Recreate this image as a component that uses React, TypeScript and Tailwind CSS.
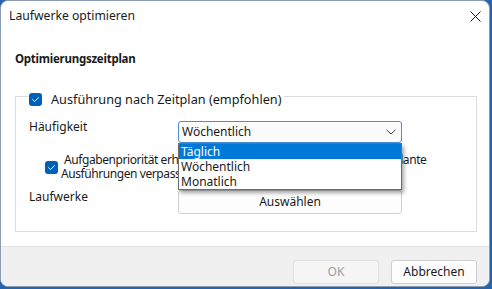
import React from "react";

function Check({ size = 13 }: { size?: number }) {
  return (
    <span
      className="flex shrink-0 items-center justify-center rounded-[3px] bg-[#005fb8]"
      style={{ width: size, height: size }}
    >
      <svg width="9" height="9" viewBox="0 0 9 9" fill="none">
        <path d="M1.6 4.7 L3.6 6.6 L7.4 2.6" stroke="white" strokeWidth="1" strokeLinecap="round" strokeLinejoin="round" />
      </svg>
    </span>
  );
}

const options = ["Täglich", "Wöchentlich", "Monatlich"];

export default function App() {
  return (
    <div className="h-[289px] w-[492px] bg-[#2563ad] font-['Noto_Sans',sans-serif] text-[12px] text-[#1a1a1a]">
      <div className="flex h-[287px] w-[490px] flex-col overflow-hidden rounded-[8px] border border-[#8c9db3] bg-white">
        {/* title bar */}
        <div className="flex h-[30px] items-center justify-between pl-[8px] pr-[8px]">
          <span className="text-[12.2px] leading-[16px]">Laufwerke optimieren</span>
          <svg width="11" height="11" viewBox="0 0 11 11">
            <path d="M0.5 0.5 L10.5 10.5 M10.5 0.5 L0.5 10.5" stroke="#1a1a1a" strokeWidth="1" />
          </svg>
        </div>

        <h1 className="ml-[14px] mt-[20px] text-[11.5px] font-bold leading-[16px] tracking-[-0.25px]">
          Optimierungszeitplan
        </h1>

        {/* group box */}
        <div className="ml-[14px] mt-[29px] h-[136px] w-[462px] border border-[#dcdcdc]">
          <div className="-mt-[7px] ml-[13px] flex h-[18px] w-fit items-center gap-[9px] bg-white pr-[3px]">
            <Check />
            <span className="text-[12.7px] leading-[16px]">Ausführung nach Zeitplan (empfohlen)</span>
          </div>

          <div className="pl-[13px]">
            <div className="mt-[11px] flex items-start">
              <span className="w-[149px] leading-[16px]">Häufigkeit</span>
              <div className="relative mt-[2px]">
                <div className="flex h-[22px] w-[224px] items-center justify-between rounded-[3px] border border-[#4a8fd6] bg-[#fbfbfb] pl-[3px] pr-[5px]">
                  <span className="leading-[16px]">Wöchentlich</span>
                  <svg width="10" height="6" viewBox="0 0 10 6" fill="none">
                    <path d="M0.5 0.8 L5 5 L9.5 0.8" stroke="#444" strokeWidth="1" />
                  </svg>
                </div>
                <ul className="absolute left-0 top-full z-10 w-[224px] border border-[#6e6e6e] bg-white shadow-[2px_3px_4px_rgba(0,0,0,0.35)]">
                  {options.map((o, i) => (
                    <li
                      key={o}
                      className={
                        i === 0
                          ? "h-[15px] bg-[#0078d7] pl-[2px] leading-[15px] text-white"
                          : "h-[15px] pl-[2px] leading-[15px]"
                      }
                    >
                      {o}
                    </li>
                  ))}
                </ul>
              </div>
            </div>

            <div className="mt-[10px] flex items-start">
              <span className="ml-[16px] mt-[8px]">
                <Check />
              </span>
              <p className="ml-[3px] indent-[3px] leading-[14px] tracking-[-0.42px]">
                Aufgabenpriorität erhöhen, wenn drei aufeinanderfolgende geplante
                <br />
                Ausführungen verpasst werden
              </p>
            </div>

            <div className="mt-[8px] flex items-start">
              <span className="w-[149px] leading-[16px]">Laufwerke</span>
              <button className="mt-[1px] h-[24px] w-[224px] rounded-[3px] border border-[#d0d0d0] bg-[#fdfdfd] leading-[16px]">
                Auswählen
              </button>
            </div>
          </div>
        </div>

        {/* footer */}
        <div className="mt-[14px] flex flex-1 items-start justify-end gap-[12px] border-t border-[#e3e3e3] bg-[#f0f0f0] pr-[12px] pt-[13px]">
          <button className="h-[24px] w-[86px] rounded-[3px] border border-[#e0e0e0] bg-[#f5f5f5] leading-[16px] text-[#a0a0a0]">
            OK
          </button>
          <button className="h-[24px] w-[86px] rounded-[3px] border border-[#cfcfcf] bg-[#fdfdfd] leading-[16px]">
            Abbrechen
          </button>
        </div>
      </div>
    </div>
  );
}
